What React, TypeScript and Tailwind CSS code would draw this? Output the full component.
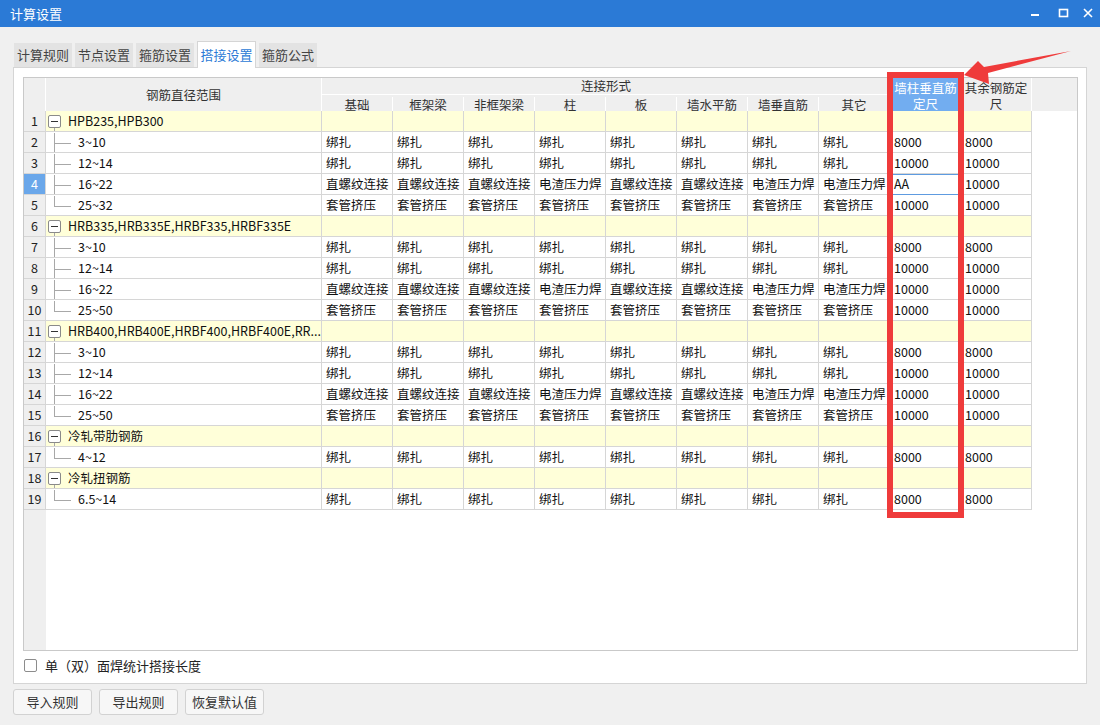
import React from 'react';

const COLS = ['基础', '框架梁', '非框架梁', '柱', '板', '墙水平筋', '墙垂直筋', '其它'];

type Row = { num: number; group?: string; label?: string; last?: boolean; vals?: string[] };

const B = (n: string[]) => n;
const bind = (a: string, b: string) => B([...Array(8).fill('绑扎'), a, b]);
const thread = (a: string, b: string) =>
  B(['直螺纹连接', '直螺纹连接', '直螺纹连接', '电渣压力焊', '直螺纹连接', '直螺纹连接', '电渣压力焊', '电渣压力焊', a, b]);
const sleeve = (a: string, b: string) => B([...Array(8).fill('套管挤压'), a, b]);

const ROWS: Row[] = [
  { num: 1, group: 'HPB235,HPB300' },
  { num: 2, label: '3~10', vals: bind('8000', '8000') },
  { num: 3, label: '12~14', vals: bind('10000', '10000') },
  { num: 4, label: '16~22', vals: thread('AA', '10000') },
  { num: 5, label: '25~32', last: true, vals: sleeve('10000', '10000') },
  { num: 6, group: 'HRB335,HRB335E,HRBF335,HRBF335E' },
  { num: 7, label: '3~10', vals: bind('8000', '8000') },
  { num: 8, label: '12~14', vals: bind('10000', '10000') },
  { num: 9, label: '16~22', vals: thread('10000', '10000') },
  { num: 10, label: '25~50', last: true, vals: sleeve('10000', '10000') },
  { num: 11, group: 'HRB400,HRB400E,HRBF400,HRBF400E,RR...' },
  { num: 12, label: '3~10', vals: bind('8000', '8000') },
  { num: 13, label: '12~14', vals: bind('10000', '10000') },
  { num: 14, label: '16~22', vals: thread('10000', '10000') },
  { num: 15, label: '25~50', last: true, vals: sleeve('10000', '10000') },
  { num: 16, group: '冷轧带肋钢筋' },
  { num: 17, label: '4~12', last: true, vals: bind('8000', '8000') },
  { num: 18, group: '冷轧扭钢筋' },
  { num: 19, label: '6.5~14', last: true, vals: bind('8000', '8000') },
];

function TreeCell({ row }: { row: Row }) {
  if (row.group) {
    return (
      <div className="relative flex h-full items-center">
        <div className="ml-[2px] flex h-[13px] w-[13px] items-center justify-center rounded-[2px] border border-[#8a8a8a] bg-white">
          <div className="h-px w-[7px] bg-[#333]" />
        </div>
        <div className="absolute left-[8px] top-[16px] bottom-0 w-px bg-[#a8a8a8]" />
        <span className="ml-[7px] whitespace-nowrap">{row.group}</span>
      </div>
    );
  }
  return (
    <div className="relative flex h-full items-center">
      <div className={`absolute left-[8px] top-0 w-px bg-[#a8a8a8] ${row.last ? 'h-[10px]' : 'bottom-0'}`} />
      <div className="absolute left-[8px] top-[10px] h-px w-[17px] bg-[#a8a8a8]" />
      <span className="ml-[32px]">{row.label}</span>
    </div>
  );
}

function Grid() {
  return (
    <div className="flex h-[574px] flex-col overflow-hidden border border-[#c9c9c9] bg-white">
      {/* header */}
      <div className="flex h-[33px] shrink-0 bg-[#efefef] text-[#333]">
        <div className="w-[22px] border-r border-white" />
        <div className="flex w-[276px] items-center justify-center border-r border-white pt-[2px]">钢筋直径范围</div>
        <div className="flex w-[568px] flex-col">
          <div className="flex h-[17px] items-center justify-center border-b border-white leading-[16px]">连接形式</div>
          <div className="flex flex-1 pt-[2px]">
            {COLS.map(c => (
              <div key={c} className="flex w-[71px] items-center justify-center border-r border-white leading-[15px]">
                {c}
              </div>
            ))}
          </div>
        </div>
        <div className="flex w-[71px] flex-col items-center justify-center bg-[#72adf0] pt-[2px] text-center leading-[16px] text-white">
          <span>墙柱垂直筋</span>
          <span>定尺</span>
        </div>
        <div className="flex w-[71px] flex-col items-center justify-center border-r border-white pt-[2px] text-center leading-[16px]">
          <span>其余钢筋定</span>
          <span>尺</span>
        </div>
        <div className="flex-1" />
      </div>

      {/* body */}
      {ROWS.map(r => {
        const yellow = !!r.group;
        const sel = r.num === 4;
        return (
          <div key={r.num} className="flex h-[21px] shrink-0 first-of-type:mt-0">
            <div
              className={`flex w-[22px] items-center justify-center border-b border-r border-[#d6d6d6] pt-px ${
                sel ? 'bg-[#6aa7ea] text-white' : 'bg-[#efefef] text-[#222]'
              }`}
            >
              {r.num}
            </div>
            <div className={`w-[276px] overflow-hidden border-b border-r border-[#d6d6d6] pt-px ${yellow ? 'bg-[#ffffd9]' : ''}`}>
              <TreeCell row={r} />
            </div>
            {Array.from({ length: 10 }).map((_, i) => {
              const editing = sel && i === 8;
              return (
                <div
                  key={i}
                  className={`flex w-[71px] items-center overflow-hidden whitespace-nowrap border-r pl-[4px] pt-px ${
                    yellow ? 'bg-[#ffffd9]' : ''
                  } ${
                    editing
                      ? 'border-b border-b-[#5e9be0] border-r-[#d6d6d6] shadow-[inset_0_1px_0_#5e9be0]'
                      : 'border-b border-[#d6d6d6]'
                  }`}
                >
                  {r.vals ? r.vals[i] : ''}
                </div>
              );
            })}
          </div>
        );
      })}
      <div className="flex flex-1">
        <div className="w-[22px] bg-[#efefef]" />
      </div>
    </div>
  );
}

const TABS = ['计算规则', '节点设置', '箍筋设置', '搭接设置', '箍筋公式'];

function Btn({ children }: { children: React.ReactNode }) {
  return (
    <button className="flex h-[26px] w-[79px] items-center justify-center rounded-[3px] border border-[#d2d2d2] bg-[#f7f7f7] text-[13px] text-[#333]">
      {children}
    </button>
  );
}

export default function App() {
  return (
    <div className="relative h-[725px] w-[1100px] overflow-hidden bg-[#f0f0f0] font-['Noto_Sans_CJK_SC',sans-serif] text-[12.5px] text-[#111]">
      {/* title bar */}
      <div className="flex h-[27px] items-center bg-[#2b7ad6] pl-[10px] text-[13px] text-white">
        <span>计算设置</span>
        <div className="ml-auto flex h-full items-center">
          <svg width="28" height="27" viewBox="0 0 28 27">
            <rect x="7" y="14" width="8" height="2" fill="white" />
          </svg>
          <svg width="28" height="27" viewBox="0 0 28 27">
            <rect x="7.5" y="9.5" width="8" height="7" fill="none" stroke="white" strokeWidth="1.6" />
          </svg>
          <svg width="20" height="27" viewBox="0 0 20 27">
            <path d="M4 9 L12 17 M12 9 L4 17" stroke="white" strokeWidth="1.6" />
          </svg>
        </div>
      </div>

      <div className="px-[13px] pt-[14px]">
        {/* tabs */}
        <div className="flex h-[26px] items-end gap-[3px] pl-px text-[13px]">
          {TABS.map(t =>
            t === '搭接设置' ? (
              <div
                key={t}
                className="relative z-10 -mb-px flex h-[27px] w-[59px] items-center justify-center border border-b-0 border-[#d5d5d5] bg-white text-[#2b7ad6]"
              >
                {t}
              </div>
            ) : (
              <div key={t} className="flex h-[24px] w-[58px] items-center justify-center bg-[#e3e3e3] text-[#444]">
                {t}
              </div>
            ),
          )}
        </div>

        {/* panel */}
        <div className="flex h-[617px] flex-col border border-[#d5d5d5] bg-white pl-[9px] pr-[8px] pt-[9px]">
          <Grid />
          <div className="mt-[5px] flex items-center text-[13px] text-[#222]">
            <div className="ml-[1px] h-[13px] w-[13px] rounded-[2px] border border-[#8c8c8c] bg-white" />
            <span className="ml-[8px]">单（双）面焊统计搭接长度</span>
          </div>
        </div>

        {/* buttons */}
        <div className="mt-[5px] flex gap-[7px]">
          <Btn>导入规则</Btn>
          <Btn>导出规则</Btn>
          <Btn>恢复默认值</Btn>
        </div>
      </div>

      {/* annotation overlay */}
      <svg className="pointer-events-none absolute left-0 top-0" width="1100" height="725" viewBox="0 0 1100 725">
        <rect x="890" y="75" width="71" height="440" fill="none" stroke="#ef3b3b" strokeWidth="6" />
        <polygon points="964,75 978,61 984,67 1071,51 988,73 989,84" fill="#ef3b3b" />
      </svg>
    </div>
  );
}
